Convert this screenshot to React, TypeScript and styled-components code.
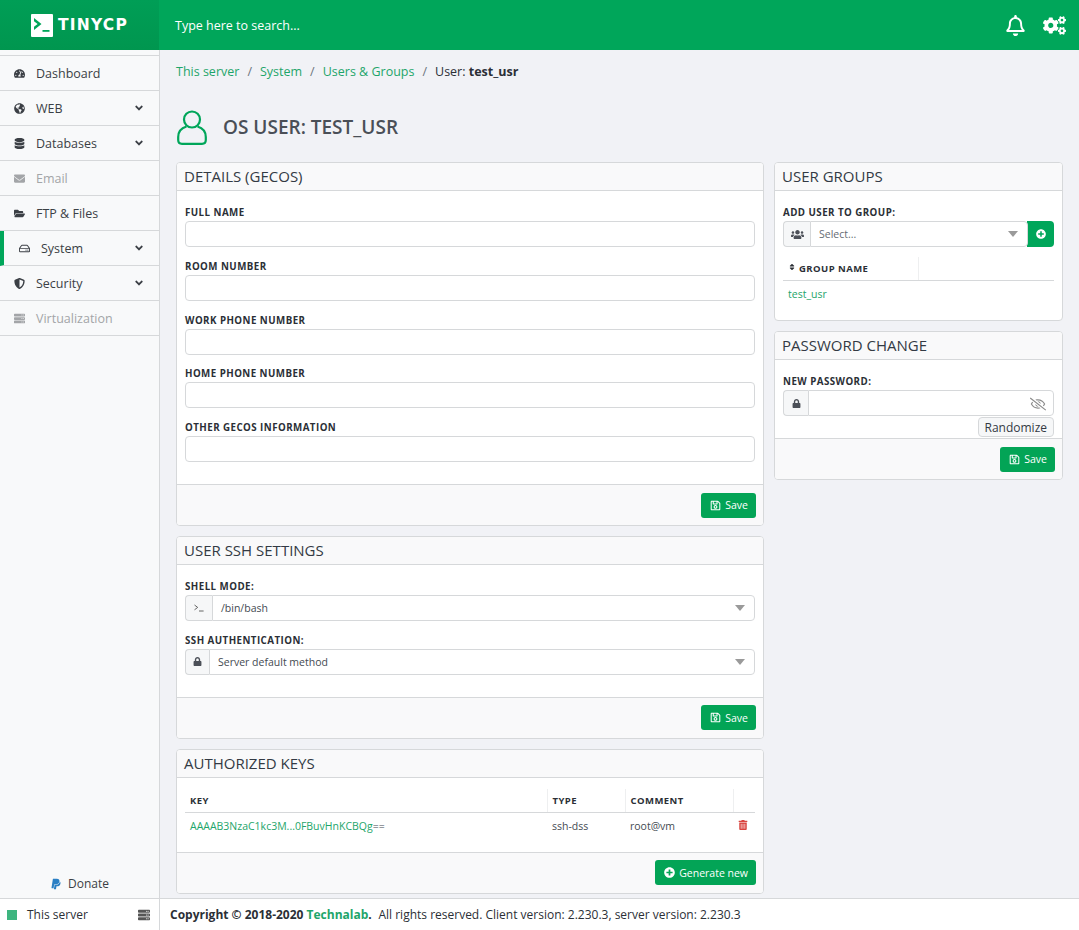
import React from 'react';
import styled, { createGlobalStyle } from 'styled-components';
import {
  FaTachometerAlt,
  FaGlobeAmericas,
  FaDatabase,
  FaEnvelope,
  FaFolderOpen,
  FaRegHdd,
  FaShieldAlt,
  FaServer,
  FaPaypal,
  FaRegBell,
  FaCogs,
  FaUsers,
  FaPlusCircle,
  FaLock,
  FaRegEyeSlash,
  FaRegSave,
  FaTrashAlt,
  FaSort,
  FaAngleDown,
} from 'react-icons/fa';

const GREEN = '#00a65a';
const LINK = '#1ea56a';
const BORDER = '#d6d8da';
const INK = '#2b2f36';

const navItems = [
  { label: 'Dashboard', icon: <FaTachometerAlt /> },
  { label: 'WEB', icon: <FaGlobeAmericas />, more: true },
  { label: 'Databases', icon: <FaDatabase />, more: true },
  { label: 'Email', icon: <FaEnvelope />, off: true },
  { label: 'FTP & Files', icon: <FaFolderOpen /> },
  { label: 'System', icon: <FaRegHdd />, more: true, active: true },
  { label: 'Security', icon: <FaShieldAlt />, more: true },
  { label: 'Virtualization', icon: <FaServer />, off: true },
];

const gecosFields = ['Full name', 'Room number', 'Work phone number', 'Home phone number', 'Other GECOS information'];

const App = () => (
  <>
    <GlobalStyle />
    <Page>
      <TopBar>
        <Brand>
          <svg width="22" height="23" viewBox="0 0 22 23">
            <rect width="22" height="23" rx="1" fill="#fff" />
            <path d="M3 4l7.5 6L3 16v-3.2L6.6 10 3 7.2z" fill={GREEN} />
            <rect x="11.5" y="16" width="7" height="1.8" fill={GREEN} />
          </svg>
          <BrandName>TINYCP</BrandName>
        </Brand>
        <SearchHint>Type here to search...</SearchHint>
        <TopIcons>
          <FaRegBell size={21} />
          <FaCogs size={23} />
        </TopIcons>
      </TopBar>

      <Sidebar>
        <Nav>
          {navItems.map((item) => (
            <NavItem key={item.label} $off={item.off} $active={item.active}>
              <NavIcon>{item.icon}</NavIcon>
              <NavLabel>{item.label}</NavLabel>
              {item.more && <FaAngleDown size={12} />}
            </NavItem>
          ))}
        </Nav>
        <Donate>
          <FaPaypal size={12} color="#2a7fc4" />
          Donate
        </Donate>
      </Sidebar>

      <Main>
        <Breadcrumb>
          <a>This server</a>
          <Slash>/</Slash>
          <a>System</a>
          <Slash>/</Slash>
          <a>Users &amp; Groups</a>
          <Slash>/</Slash>
          <span>
            User: <b>test_usr</b>
          </span>
        </Breadcrumb>

        <PageTitle>
          <svg width="30" height="35" viewBox="0 0 30 35" fill="none" stroke={GREEN} strokeWidth="2.2">
            <circle cx="15" cy="9.5" r="8" />
            <path d="M9.5 16.5C4.5 18 1.2 21.5 1.2 27v3c0 2.3 1.5 3.8 3.8 3.8h20c2.3 0 3.8-1.5 3.8-3.8v-3c0-5.5-3.3-9-8.3-10.5" />
          </svg>
          <h1>OS USER: TEST_USR</h1>
        </PageTitle>

        <Columns>
          <Column>
            <Panel>
              <PanelTitle>DETAILS (GECOS)</PanelTitle>
              <PanelBody>
                {gecosFields.map((name) => (
                  <Field key={name}>
                    <FieldLabel>{name}</FieldLabel>
                    <TextInput />
                  </Field>
                ))}
              </PanelBody>
              <PanelFooter>
                <GreenButton>
                  <FaRegSave size={11} />
                  Save
                </GreenButton>
              </PanelFooter>
            </Panel>

            <Panel>
              <PanelTitle>USER SSH SETTINGS</PanelTitle>
              <PanelBody>
                <Field>
                  <FieldLabel>Shell mode:</FieldLabel>
                  <InputGroup>
                    <Addon $width={27}>
                      <svg width="10" height="8" viewBox="0 0 10 8" fill="none" stroke="#555" strokeWidth="0.9">
                        <path d="M0.5 1l3.2 2.4L0.5 5.8M5 7h4.6" />
                      </svg>
                    </Addon>
                    <SelectBox>/bin/bash<Caret /></SelectBox>
                  </InputGroup>
                </Field>
                <Field>
                  <FieldLabel>SSH authentication:</FieldLabel>
                  <InputGroup>
                    <Addon $width={24}>
                      <FaLock size={9} />
                    </Addon>
                    <SelectBox>Server default method<Caret /></SelectBox>
                  </InputGroup>
                </Field>
              </PanelBody>
              <PanelFooter>
                <GreenButton>
                  <FaRegSave size={11} />
                  Save
                </GreenButton>
              </PanelFooter>
            </Panel>

            <Panel>
              <PanelTitle>AUTHORIZED KEYS</PanelTitle>
              <KeysBody>
                <DataTable>
                  <colgroup>
                    <col />
                    <col width="78" />
                    <col width="108" />
                    <col width="22" />
                  </colgroup>
                  <thead>
                    <tr>
                      <HeadCell>Key</HeadCell>
                      <HeadCell>Type</HeadCell>
                      <HeadCell>Comment</HeadCell>
                      <HeadCell />
                    </tr>
                  </thead>
                  <tbody>
                    <tr>
                      <Cell><a>AAAAB3NzaC1kc3M...0FBuvHnKCBQg</a>==</Cell>
                      <Cell>ssh-dss</Cell>
                      <Cell>root@vm</Cell>
                      <Cell><FaTrashAlt size={10} color="#d9443f" /></Cell>
                    </tr>
                  </tbody>
                </DataTable>
              </KeysBody>
              <PanelFooter>
                <GreenButton>
                  <FaPlusCircle size={11} />
                  Generate new
                </GreenButton>
              </PanelFooter>
            </Panel>
          </Column>

          <Column>
            <Panel>
              <PanelTitle>USER GROUPS</PanelTitle>
              <GroupsBody>
                <Field>
                  <FieldLabel>Add user to group:</FieldLabel>
                  <InputGroup>
                    <Addon $width={27}>
                      <FaUsers size={13} />
                    </Addon>
                    <SelectBox $muted>Select...<Caret /></SelectBox>
                    <AddButton>
                      <FaPlusCircle size={10} />
                    </AddButton>
                  </InputGroup>
                </Field>
                <GroupTable>
                  <colgroup>
                    <col width="135" />
                    <col />
                  </colgroup>
                  <thead>
                    <tr>
                      <HeadCell><FaSort size={8} />Group name</HeadCell>
                      <HeadCell />
                    </tr>
                  </thead>
                  <tbody>
                    <tr>
                      <Cell><a>test_usr</a></Cell>
                      <Cell />
                    </tr>
                  </tbody>
                </GroupTable>
              </GroupsBody>
            </Panel>

            <Panel>
              <PanelTitle>PASSWORD CHANGE</PanelTitle>
              <PasswordBody>
                <Field>
                  <FieldLabel>New password:</FieldLabel>
                  <InputGroup>
                    <Addon $width={25}>
                      <FaLock size={9} />
                    </Addon>
                    <SelectBox>
                      <EyeIcon><FaRegEyeSlash size={16} /></EyeIcon>
                    </SelectBox>
                  </InputGroup>
                </Field>
                <RandomizeRow>
                  <Randomize>Randomize</Randomize>
                </RandomizeRow>
              </PasswordBody>
              <PanelFooter>
                <GreenButton>
                  <FaRegSave size={11} />
                  Save
                </GreenButton>
              </PanelFooter>
            </Panel>
          </Column>
        </Columns>
      </Main>

      <ServerSwitch>
        <StatusDot />
        <span>This server</span>
        <FaServer size={12} color="#555" />
      </ServerSwitch>
      <Copyright>
        <b>Copyright © 2018-2020 <a>Technalab</a>.</b> All rights reserved. Client version: 2.230.3, server version: 2.230.3
      </Copyright>
    </Page>
  </>
);

export default App;

const GlobalStyle = createGlobalStyle`
  html, body {
    margin: 0;
    padding: 0;
    height: 100%;
    overflow: hidden;
  }
  body {
    font-family: "Open Sans", "Liberation Sans", sans-serif;
    font-size: 12px;
    color: ${INK};
    background: #f1f2f6;
  }
  a {
    color: ${LINK};
    text-decoration: none;
  }
`;

const Page = styled.div`
  display: grid;
  grid-template-columns: 160px 1fr;
  grid-template-rows: 50px 1fr 32px;
  height: 930px;
`;

const TopBar = styled.header`
  grid-column: 1 / 3;
  display: flex;
  align-items: center;
  background: ${GREEN};
  color: #fff;
`;

const Brand = styled.div`
  width: 159px;
  height: 100%;
  display: flex;
  align-items: center;
  justify-content: center;
  gap: 5px;
  background: linear-gradient(#009e56, #00964f);
`;

const BrandName = styled.span`
  font-family: "DejaVu Sans", sans-serif;
  font-weight: 700;
  font-size: 15.5px;
  letter-spacing: 1.2px;
`;

const SearchHint = styled.div`
  margin-left: 16px;
  flex: 1;
  font-size: 12.5px;
`;

const TopIcons = styled.div`
  display: flex;
  align-items: center;
  gap: 17px;
  padding-right: 13px;
`;

const Sidebar = styled.aside`
  display: flex;
  flex-direction: column;
  justify-content: space-between;
  padding-top: 5px;
  background: #f8f9fa;
  border-right: 1px solid ${BORDER};
`;

const Nav = styled.nav`
  border-top: 1px solid ${BORDER};
`;

const NavItem = styled.div<{ $off?: boolean; $active?: boolean }>`
  display: flex;
  align-items: center;
  height: 34px;
  padding: 0 14px ${'0'} ${(p) => (p.$active ? '14px' : '14px')};
  border-bottom: 1px solid ${BORDER};
  border-left: ${(p) => (p.$active ? `4px solid ${GREEN}` : '0')};
  color: ${(p) => (p.$off ? '#a3a5a8' : '#3b3f45')};
  font-size: 12.5px;

  ${(p) => p.$active && 'padding-left: 15px;'}
`;

const NavIcon = styled.span`
  display: flex;
  width: 22px;
  font-size: 11px;
`;

const NavLabel = styled.span`
  flex: 1;
`;

const Donate = styled.div`
  display: flex;
  align-items: center;
  justify-content: center;
  gap: 6px;
  height: 29px;
  font-size: 12px;
  color: #3b3f45;
`;

const Main = styled.main`
  padding: 0 16px;
  min-width: 0;
  overflow: hidden;
`;

const Breadcrumb = styled.div`
  height: 42px;
  display: flex;
  align-items: center;
  font-size: 12.5px;

  b {
    font-weight: 700;
  }
`;

const Slash = styled.span`
  margin: 0 8px;
  color: #6c757d;
`;

const PageTitle = styled.div`
  height: 70px;
  display: flex;
  align-items: center;
  gap: 16px;
  padding-left: 1px;

  h1 {
    margin: 0;
    font-size: 19px;
    font-weight: 600;
    color: #4a4f57;
  }
`;

const Columns = styled.div`
  display: grid;
  grid-template-columns: 588px 289px;
  gap: 10px;
`;

const Column = styled.div`
  display: flex;
  flex-direction: column;
  gap: 10px;
`;

const Panel = styled.section`
  background: #fff;
  border: 1px solid ${BORDER};
  border-radius: 4px;
  overflow: hidden;
`;

const PanelTitle = styled.h2`
  margin: 0;
  height: 27px;
  line-height: 26px;
  padding: 0 7px;
  font-size: 15px;
  font-weight: 400;
  color: #333a44;
  background: #f9f9fa;
  border-bottom: 1px solid ${BORDER};
`;

const PanelBody = styled.div`
  display: flex;
  flex-direction: column;
  gap: 12.75px;
  padding: 15px 8px 22px;
`;

const KeysBody = styled.div`
  height: 74px;
  padding: 11px 8px 0;
  box-sizing: border-box;
`;

const GroupsBody = styled.div`
  padding: 15px 8px 13px;
`;

const PasswordBody = styled.div`
  padding: 15px 8px 1px;
`;

const Field = styled.div`
  display: flex;
  flex-direction: column;
`;

const FieldLabel = styled.label`
  height: 15px;
  line-height: 14px;
  font-size: 9.75px;
  font-weight: 700;
  letter-spacing: 0.45px;
  text-transform: uppercase;
  color: ${INK};
`;

const TextInput = styled.input`
  height: 26px;
  box-sizing: border-box;
  border: 1px solid ${BORDER};
  border-radius: 4px;
  background: #fff;
`;

const InputGroup = styled.div`
  display: flex;
  height: 26px;
  font-size: 10.5px;
`;

const Addon = styled.span<{ $width: number }>`
  flex: 0 0 ${(p) => p.$width}px;
  display: flex;
  align-items: center;
  justify-content: center;
  box-sizing: border-box;
  background: #f6f7f8;
  border: 1px solid ${BORDER};
  border-right: 0;
  border-radius: 4px 0 0 4px;
  color: #4c5058;
`;

const SelectBox = styled.div<{ $muted?: boolean }>`
  flex: 1;
  position: relative;
  display: flex;
  align-items: center;
  padding-left: 8px;
  border: 1px solid ${BORDER};
  border-radius: 0 4px 4px 0;
  background: #fff;
  color: ${(p) => (p.$muted ? '#666c74' : '#444a52')};
`;

const Caret = styled.i`
  position: absolute;
  right: 9px;
  top: 9px;
  border-left: 5.5px solid transparent;
  border-right: 5.5px solid transparent;
  border-top: 6px solid #9a9a9a;
`;

const EyeIcon = styled.span`
  position: absolute;
  right: 7px;
  top: 5px;
  color: #8b8b8b;
`;

const AddButton = styled.button`
  flex: 0 0 27px;
  display: flex;
  align-items: center;
  justify-content: center;
  margin-left: -1px;
  padding: 0;
  border: 0;
  border-radius: 0 4px 4px 0;
  background: ${GREEN};
  color: #fff;
`;

const RandomizeRow = styled.div`
  display: flex;
  justify-content: flex-end;
  margin-top: 1px;
`;

const Randomize = styled.button`
  height: 20px;
  padding: 0 6px;
  font-family: inherit;
  font-size: 12px;
  color: #333a44;
  background: #f6f7f8;
  border: 1px solid ${BORDER};
  border-radius: 4px;
`;

const PanelFooter = styled.div`
  display: flex;
  justify-content: flex-end;
  align-items: center;
  height: 40px;
  padding-right: 7px;
  background: #f9f9fa;
  border-top: 1px solid ${BORDER};
`;

const GreenButton = styled.button`
  display: flex;
  align-items: center;
  gap: 4px;
  height: 25px;
  padding: 0 8px 0 9px;
  font-family: inherit;
  font-size: 10.5px;
  color: #fff;
  background: #03a456;
  border: 0;
  border-radius: 3px;
`;

const DataTable = styled.table`
  width: 100%;
  table-layout: fixed;
  border-collapse: collapse;
  font-size: 10.5px;
`;

const GroupTable = styled(DataTable)`
  margin-top: 10px;
`;

const HeadCell = styled.th`
  height: 23px;
  padding: 0 5px;
  text-align: left;
  font-size: 9.5px;
  font-weight: 700;
  letter-spacing: 0.45px;
  text-transform: uppercase;
  white-space: nowrap;
  color: ${INK};
  border-bottom: 1px solid ${BORDER};
  border-right: 1px solid #eeeff0;

  &:last-child {
    border-right: 0;
  }

  svg {
    margin-right: 3px;
    vertical-align: 1px;
  }
`;

const Cell = styled.td`
  padding: 6px 5px;
  color: #444a52;
  white-space: nowrap;
`;

const ServerSwitch = styled.div`
  display: flex;
  align-items: center;
  padding: 0 9px 0 7px;
  background: #fff;
  border-top: 1px solid ${BORDER};
  border-right: 1px solid ${BORDER};
  font-size: 12px;

  span {
    flex: 1;
  }
`;

const StatusDot = styled.i`
  width: 10px;
  height: 10px;
  margin-right: 10px;
  background: #3eb57f;
`;

const Copyright = styled.footer`
  display: flex;
  align-items: center;
  gap: 0.3em;
  padding-left: 10px;
  background: #fff;
  border-top: 1px solid ${BORDER};
  font-size: 12px;
  white-space: pre;

  b {
    font-weight: 700;
  }
`;
